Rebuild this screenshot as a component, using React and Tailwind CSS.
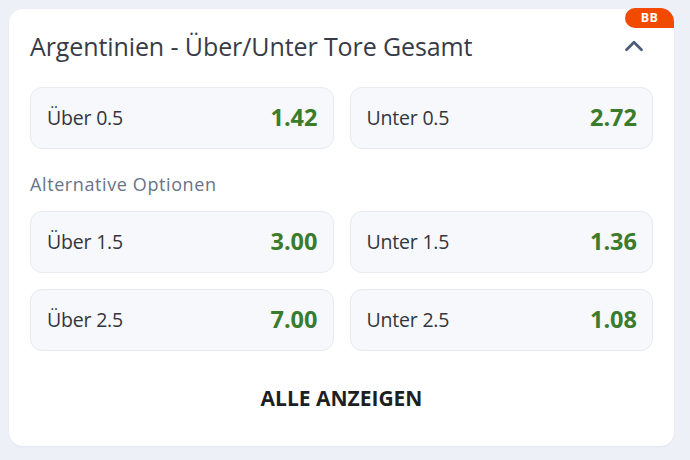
import { ChevronUp } from "lucide-react";

const mainRow = [
    { label: "Über 0.5", odd: "1.42" },
    { label: "Unter 0.5", odd: "2.72" },
];

const altRows = [
    [{ label: "Über 1.5", odd: "3.00" }, { label: "Unter 1.5", odd: "1.36" }],
    [{ label: "Über 2.5", odd: "7.00" }, { label: "Unter 2.5", odd: "1.08" }],
];

const OddBox = ({ label, odd }) => (
    <button className="flex h-[62px] items-center justify-between rounded-[12px] border border-[#e8eaf2] bg-[#f7f8fc] pl-4 pr-[15px]">
        <span className="text-[19.5px] tracking-[-0.2px] text-[#33353d]">{label}</span>
        <span className="text-[23.5px] font-bold text-[#3a7b2c]">{odd}</span>
    </button>
);

const App = () => {
    return (
        <div className="h-[460px] w-[690px] bg-[#eef0f8] pl-[9px] pt-[9px] font-['Open_Sans',sans-serif]">
            <div className="relative w-[665px] rounded-[14px] bg-white px-[21px] pb-[34px] pt-[22px] shadow-[0_1px_2px_rgba(30,40,90,0.05)]">
                {/* Bet builder badge */}
                <div className="absolute -top-px right-0 flex h-[20px] w-[49px] items-center justify-center rounded-bl-[10px] rounded-tl-[10px] rounded-tr-[14px] bg-[#f24a00] text-[12.5px] font-bold tracking-wide text-white">
                    BB
                </div>

                <div className="flex items-center justify-between">
                    <h2 className="text-[25px] leading-[30px] tracking-[-0.1px] text-[#383b47]">Argentinien - Über/Unter Tore Gesamt</h2>
                    <ChevronUp size={30} strokeWidth={2.2} className="mr-[4px] text-[#4b5b78]" />
                </div>

                <div className="mt-[26px] grid grid-cols-2 gap-4">
                    {mainRow.map(o => <OddBox key={o.label} {...o} />)}
                </div>

                <p className="mt-[24px] text-[18px] leading-[22px] tracking-[0.6px] text-[#6a7387]">Alternative Optionen</p>

                <div className="mt-[16px] grid grid-cols-2 gap-4">
                    {altRows.flat().map(o => <OddBox key={o.label} {...o} />)}
                </div>

                <div className="mt-[35px] text-center leading-[24px]">
                    <button className="text-[21px] leading-[24px] font-bold text-[#1e1f24]">ALLE ANZEIGEN</button>
                </div>
            </div>
        </div>
    );
};

export default App;
